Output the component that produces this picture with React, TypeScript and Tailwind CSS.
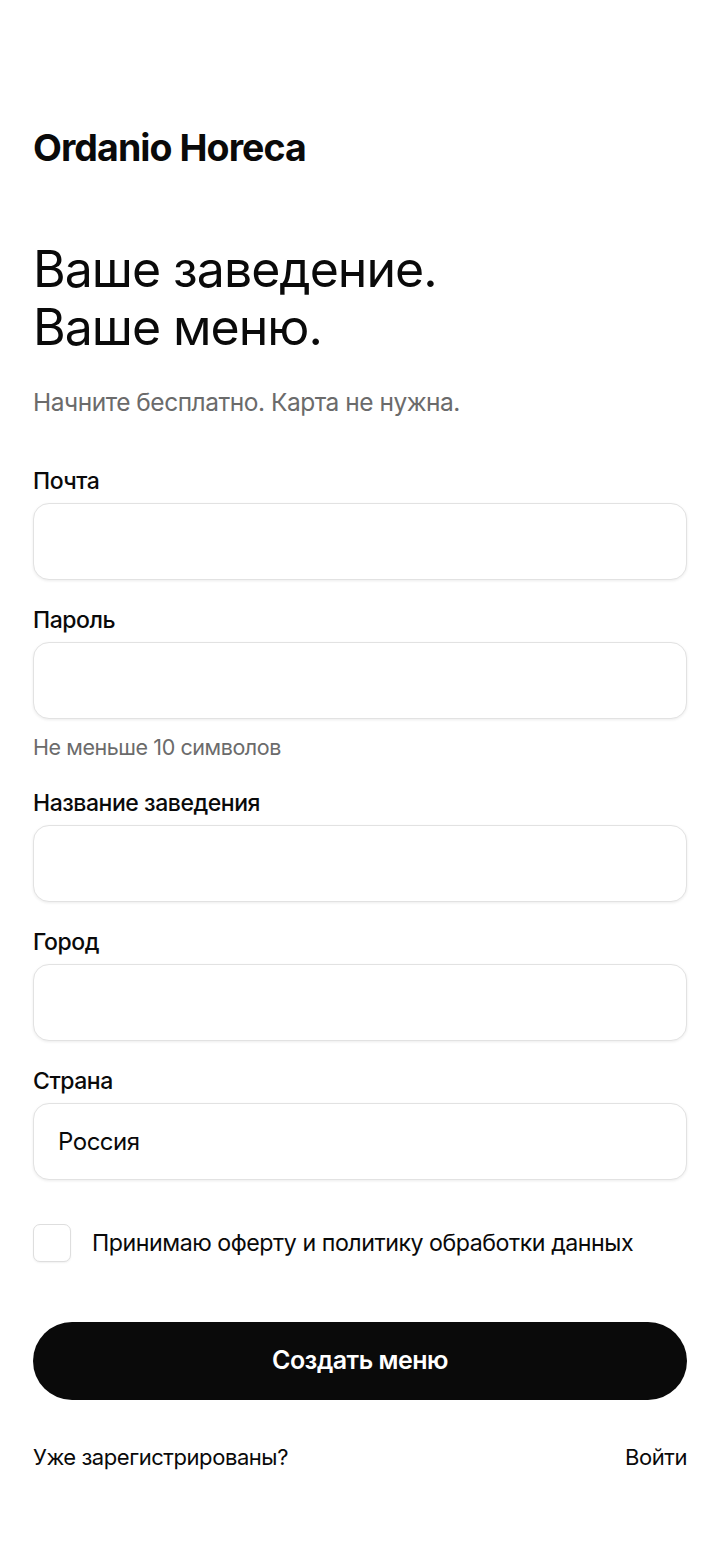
import { useState } from "react";

const font = { fontFamily: "Inter, 'Noto Sans', sans-serif" };

export default function App() {
  const [agree, setAgree] = useState(false);

  return (
    <main className="min-h-screen bg-white px-[33px] pt-[126px] pb-16 text-[#0a0a0a]" style={font}>
      <h1 className="text-[37.5px] font-bold leading-[44px] tracking-[-0.025em]">Ordanio Horeca</h1>

      <h2 className="mt-[70px] text-[50px] font-normal leading-[58px] tracking-[-0.02em]">
        Ваше заведение.
        <br />
        Ваше меню.
      </h2>
      <p className="mt-[31px] text-[24.5px] leading-[30px] tracking-[-0.02em] text-[#6b6b6b]">
        Начните бесплатно. Карта не нужна.
      </p>

      <form className="mt-[50px] flex flex-col gap-[26px]" onSubmit={(e) => e.preventDefault()}>
        <Field label="Почта" type="email" />
        <Field label="Пароль" type="password" hint="Не меньше 10 символов" />
        <Field label="Название заведения" />
        <Field label="Город" />
        <Field label="Страна" defaultValue="Россия" />

        <label className="mt-[18px] flex items-center gap-[21px] text-[23.2px] leading-[30px] tracking-[-0.02em]">
          <input
            type="checkbox"
            checked={agree}
            onChange={(e) => setAgree(e.target.checked)}
            className="h-[38px] w-[38px] shrink-0 appearance-none rounded-[7px] border border-[#dedede] bg-white shadow-[0_1px_2px_rgba(0,0,0,0.06)]"
          />
          Принимаю оферту и политику обработки данных
        </label>

        <button className="mt-[34px] h-[78px] w-full rounded-full bg-[#0a0a0a] text-[25px] font-semibold tracking-[-0.02em] text-white">
          Создать меню
        </button>

        <div className="mt-[16px] flex items-center justify-between text-[22px] leading-[30px] tracking-[-0.02em]">
          <span>Уже зарегистрированы?</span>
          <a href="#">Войти</a>
        </div>
      </form>
    </main>
  );
}

function Field({
  label,
  type = "text",
  hint,
  defaultValue,
}: {
  label: string;
  type?: string;
  hint?: string;
  defaultValue?: string;
}) {
  return (
    <div className="flex flex-col">
      <label className="text-[23px] font-medium leading-[28px] tracking-[-0.02em]">
        {label}
        <input
          type={type}
          defaultValue={defaultValue}
          className="mt-[8px] block h-[77px] w-full rounded-[16px] border border-[#e2e2e2] bg-white px-[24px] text-[24px] font-normal tracking-[-0.02em] text-[#0a0a0a] shadow-[0_1px_3px_rgba(0,0,0,0.08)] outline-none"
        />
      </label>
      {hint ? (
        <p className="mt-[16px] mb-[4px] text-[21.5px] leading-[24px] tracking-[-0.02em] text-[#6b6b6b]">{hint}</p>
      ) : null}
    </div>
  );
}
